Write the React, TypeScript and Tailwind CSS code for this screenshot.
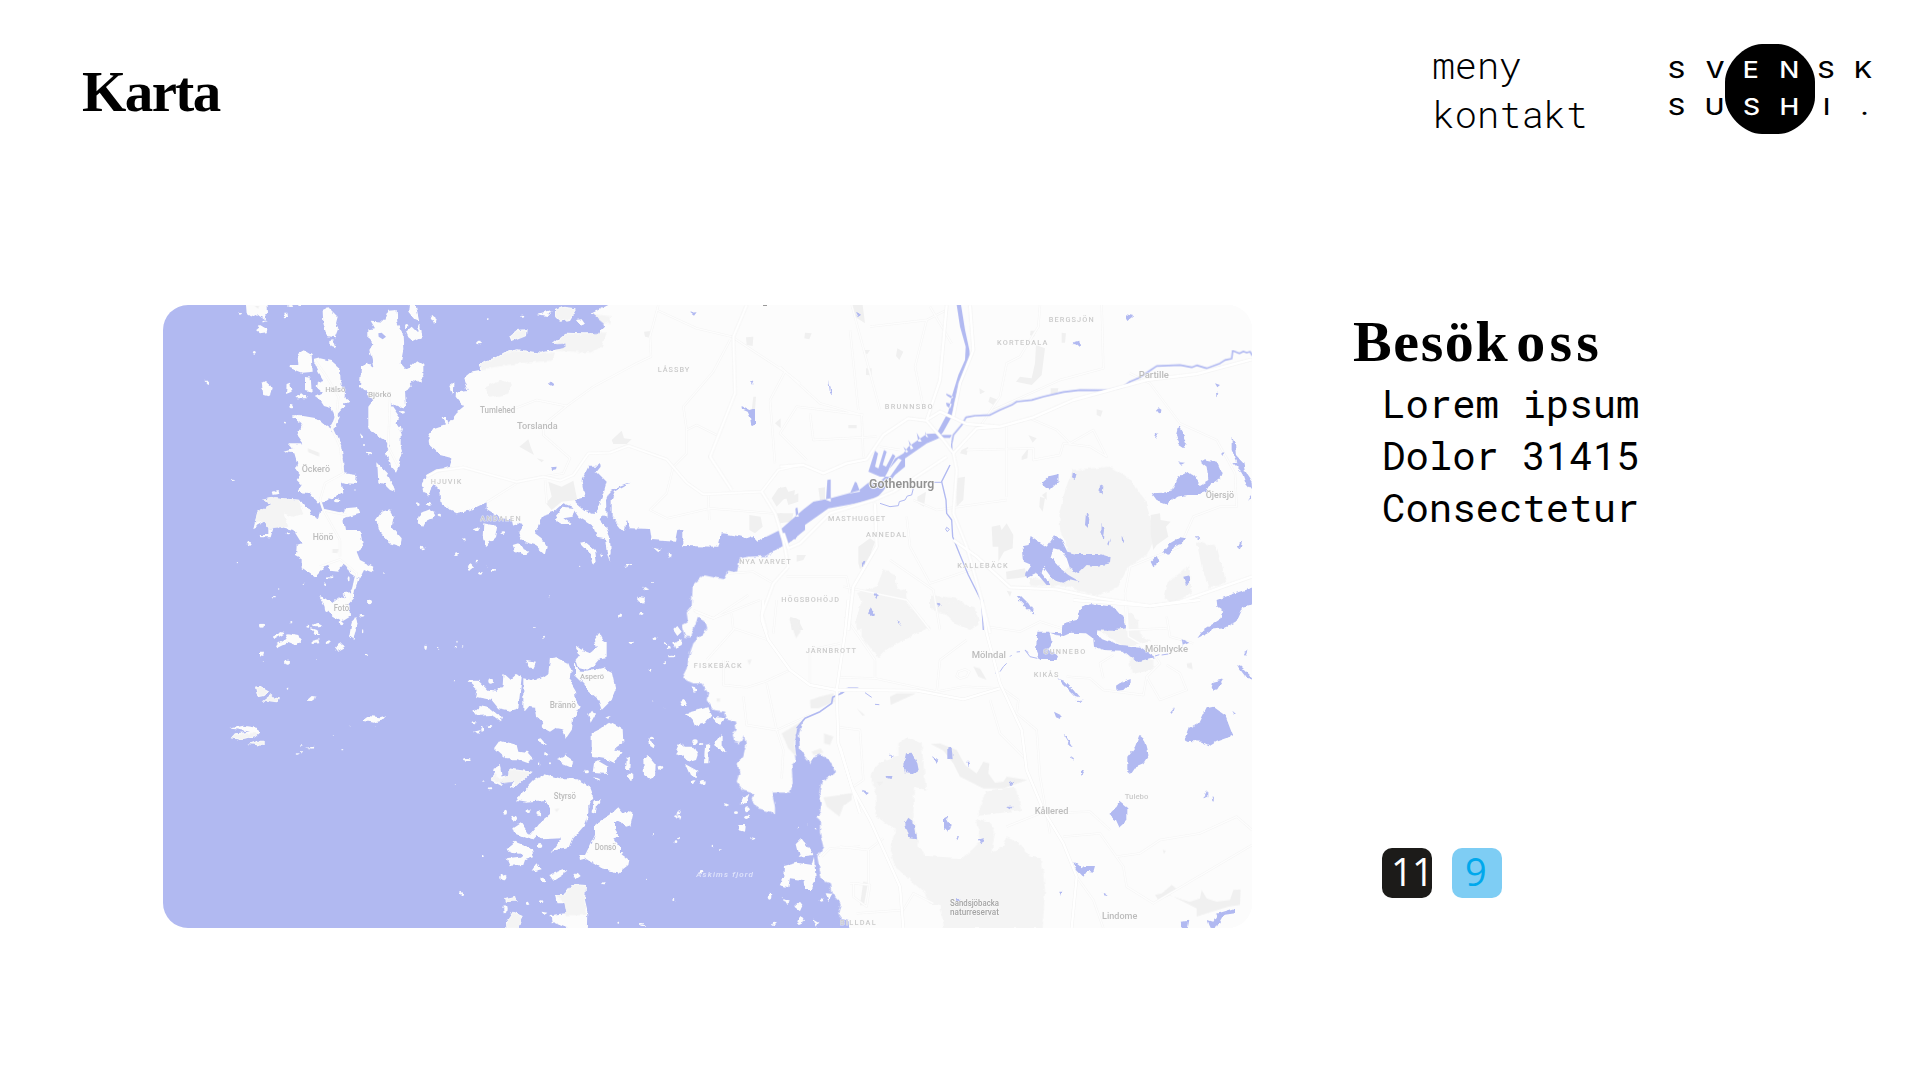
import React from 'react';

type Dot = [number, number, number, number];
type Label = [string, number, number, number, number, string?];

// Each map tile has its own origin; units are thirds of a pixel.
const NW = 'translate(160 300) scale(0.33333)';
const N = 'translate(420 300) scale(0.33333)';
const NE = 'translate(780 300) scale(0.33333)';
const SW = 'translate(160 600) scale(0.33333)';
const S = 'translate(460 600) scale(0.33333)';
const SE = 'translate(840 600) scale(0.33333)';

const landN = `M575 -30 565 15 515 40 530 50 553 55 555 80 540 95 540 110 525 100 490 100 440 98 420 115 398 132 437 130 437 145 400 150 360 158 290 148 250 160 230 172 205 178 175 195 183 212 150 218 130 235 143 270 108 275 107 290 132 322 110 340 85 372 78 348 65 352 78 372 40 385 25 410 28 435 60 465 97 475 90 500 50 512 20 528 5 555 20 588 35 570 40 550 60 570 65 610 90 630 110 640 145 632 200 607 200 630 240 655 275 658 280 680 300 668 310 680 295 700 310 725 345 735 375 762 380 740 365 715 345 700 368 645 400 635 430 610 455 620 475 650 520 680 530 710 555 715 560 755 568 785 572 755 570 710 555 675 538 662 545 645 560 650 558 600 570 575 600 560 640 545 640 535 625 537 637 545 610 562 585 575 575 600 575 650 610 693 615 690 620 660 630 685 690 687 695 720 765 725 772 690 790 687 790 738 895 740 905 700 940 705 980 715 1000 708 1015 725 1035 712 1075 705 1140 690 1140 720 2600 720 2600 -30z`;
const landS = `M1020 -200 985 -170 950 -155 920 -132 870 -130 840 -125 830 -80 805 -88 790 -62 730 -75 698 -45 695 20 680 38 684 65 665 75 675 110 690 112 715 50 735 60 742 85 700 130 688 165 680 205 665 235 700 250 725 250 745 280 740 300 760 330 795 335 800 355 825 365 830 390 818 400 822 425 840 430 852 405 858 435 850 470 833 490 838 520 830 545 850 572 880 580 875 600 895 625 930 635 945 645 945 620 935 578 990 578 998 550 995 495 1010 480 1003 430 1010 385 1035 355 1017 400 1020 450 1050 490 1060 470 1080 462 1115 490 1125 520 1085 545 1078 580 1085 610 1080 640 1068 650 1080 660 1080 700 1090 740 1072 770 1085 840 1110 850 1115 880 1142 910 1135 940 1160 984 1165 1020 2500 1020 2500 -200z`;
const islesNW = `M258 0 258 15 260 40 275 50 290 42 318 62 316 45 324 38 322 0z M285 88 300 75 322 88 320 97 300 100z M370 38 382 38 384 50 372 52z
M488 30 505 22 533 50 528 70 535 85 525 112 500 108 490 70z M508 120 520 118 530 145 508 138z M748 0 768 0 768 20 778 65 765 60 745 35z M818 45 826 50 825 75 812 55z M738 95 755 80 770 95 786 100 783 115 762 125 745 112z
M412 160 430 150 455 165 458 215 425 218 388 203 390 195 415 195z M460 180 480 175 515 183 540 205 542 255 555 270 552 320 530 345 540 350 520 388 510 380 525 355 515 325 492 318 480 300 468 290 490 280 470 262 475 245 490 240 475 215z
M435 228 452 230 455 275 435 270z M305 248 315 243 335 260 330 290 310 285z M380 252 390 248 395 275 378 282z M405 295 425 278 445 295z M133 242 148 242 142 253z
M685 32 710 30 712 70 728 100 730 150 722 190 740 210 770 183 790 195 790 225 780 240 765 245 752 242 755 260 735 272 738 318 712 322 690 310 718 350 710 370 722 400 722 440 728 460 715 500 708 515 690 495 678 460 690 435 658 410 625 385 625 320 640 300 600 260 603 200 622 188 640 200 635 175 628 150 640 130 625 115 625 88 645 85 632 62 672 65z
M400 350 430 348 470 355 500 380 530 400 545 440 550 490 552 520 590 525 588 552 560 550 545 545 550 580 520 590 500 605 475 610 450 580 412 575 425 555 410 540 420 525 405 505 412 490 403 460 370 455 400 447 385 430 430 430 412 405 425 370z
M305 600 345 592 420 600 455 645 475 655 480 630 550 640 555 625 590 622 598 642 550 655 555 690 600 690 610 740 590 755 600 780 640 800 635 820 612 810 598 838 570 820 555 790 535 815 510 812 500 795 465 832 425 805 425 775 408 765 410 735 425 730 400 690 360 680 325 685 315 665 280 685 292 635 335 612z M335 575 355 570 358 582 338 585z
M325 685 340 685 332 712 298 712 300 705 325 705z M590 835 596 838 582 880 572 880z M475 888 495 895 515 910 540 892 555 895 548 880 582 875 582 895 568 910 570 950 545 965 520 950 495 920z M585 950 592 970 580 1020 568 1010z
M652 490 680 520 700 555 705 575 690 570 675 555 655 550z M648 660 665 635 690 628 702 650 695 680 725 715 722 740 690 730 660 695z M775 650 790 635 825 635 820 655 800 660 790 680 773 670z M790 535 815 550 805 590 788 570z M600 400 610 410 605 420z M870 260 880 255 876 285z M620 455 638 458 626 466z`;
const islesN = `M405 30 430 20 470 25 450 60 420 65 405 50z M468 60 485 58 495 72 480 78z M352 42 395 30 380 48z M268 108 290 90 320 88 318 108 275 125z M88 258 100 250 98 285z M190 670 232 678 225 715 195 738 188 710z M278 735 295 730 305 745 328 755 315 765 285 752z M480 728 495 725 525 750 530 785 518 797 510 760z M405 650 430 620 465 625 458 650 430 655 455 672 420 672z M700 743 722 748 715 757z M742 758 752 760 750 775z M620 792 640 792 625 800z M652 890 675 895 670 908 652 900z M670 860 688 868 675 872z M140 798 152 790 162 800 150 810z M0 640 30 628 48 640 30 660 0 675z M35 45 47 55 42 75z`;
const islesSW = `M338 110 365 96 375 100 345 118z M348 135 375 118 385 100 415 105 423 125 405 138 380 128 352 142z M452 85 475 92 480 102 465 102z M455 122 475 118 478 130 455 132z M525 142 545 130 555 145 535 155z M575 65 588 52 592 72 580 118 568 110z M285 260 300 257 328 272 310 288 292 292z M305 305 335 282 335 292 360 295 350 310 322 305z M442 302 458 288 473 290 455 303z M605 362 625 348 660 352 680 346 665 362 640 368z M208 386 250 377 290 383 300 398 285 412 250 420 212 415 225 400 270 395 230 388z M265 432 290 422 314 422 314 438z M438 443 460 440 458 446z M300 155 312 155 310 168 300 166z M375 182 387 182 385 195 376 192z M793 137 804 138 802 146 793 146z M300 72 312 72 308 82z`;
const islesS = `M22 242 55 242 85 272 110 275 128 255 130 222 150 240 170 222 185 235 175 325 150 332 115 325 95 300 45 290 50 270z M190 235 215 240 250 230 265 220 270 175 290 172 325 190 335 215 330 250 345 275 348 300 362 320 340 355 335 390 318 415 305 385 290 382 270 395 250 385 245 365 228 350 225 320 205 318 190 335z
M195 182 228 188 220 205 205 202z M40 335 60 318 90 325 120 350 122 365 95 345 50 348z M42 395 62 390 55 405z M345 135 362 148 390 158 408 145 402 122 418 98 428 118 440 125 440 170 420 175 400 198 380 210 358 205 350 180 360 165z M345 180 358 215 380 215 430 203 455 215 467 270 455 300 425 330 415 300 385 275 370 250 345 225z
M385 345 395 330 405 345 392 368z M435 350 448 345 445 358z M395 400 425 385 450 365 488 385 490 430 465 448 485 455 465 490 440 478 395 470z M402 490 415 483 445 500 440 522 398 518z M395 528 415 532 422 543z M102 445 120 420 170 435 175 455 205 460 218 475 205 490 172 478 140 478z M235 418 245 415 258 430 245 435z M288 480 310 470 315 460 325 475 340 485 335 500 310 490z
M90 540 105 520 95 510 120 495 125 530 145 525 145 505 215 515 185 545 165 565 150 560 160 545 120 545 130 560z M222 540 255 523 300 535 350 535 385 555 400 595 385 615 385 640 370 680 340 715 330 740 305 745 275 755 305 715 245 718 230 705 215 720 165 700 160 685 185 668 210 705 240 670 270 645 270 625 255 600 200 605 172 600 180 585z
M400 605 412 600 408 640 398 635z M405 672 450 645 475 622 490 640 505 630 520 640 512 675 495 680 480 660 465 665 465 690 478 710 460 715 480 740 480 760 508 780 505 795 475 818 425 805 380 775 360 780 358 765 375 765 390 735 405 705z
M140 745 165 725 215 745 222 772 195 780 190 795 150 797 140 775 180 770 190 762 150 758z M215 815 232 790 245 808z M268 825 310 810 322 815 280 842z M340 825 350 815 362 828 348 838z M135 895 165 888 170 905 138 905z M138 965 158 935 188 948 175 984 175 1010 140 1010z M285 885 310 885 335 852 378 855 375 900 382 930 380 1010 320 1010 320 984 275 965 272 945 320 940 315 910 290 910z M245 935 262 938 250 948z
M562 415 582 432 578 445 568 438z M550 480 562 465 587 495 585 530 572 540 552 525z M500 475 510 470 508 510 498 510z M678 340 745 322 755 345 735 370 705 378 695 355z M758 350 795 355 780 375z M645 460 658 428 675 440 700 440 713 465 708 480 690 485 665 465z M675 492 712 512 710 535 690 525z M735 435 748 432 745 490 732 490z M762 435 785 402 785 432 800 460 775 445z M640 90 652 78 665 95 652 108z M640 130 668 118 665 135 645 145z M850 590 868 582 858 610 842 610z M835 672 858 672 855 695 836 690z M870 712 890 715 878 720z M787 610 808 612 795 618z M1010 730 1025 715 1062 765 1020 770z M972 798 1010 788 1055 795 1062 770 1067 835 1055 870 1035 870 1030 840 990 835 985 862 958 855 970 830z M965 895 990 905 978 915z M1003 920 1020 905 1030 918 1022 935z M1100 880 1118 882 1108 900z M1012 960 1022 948 1035 965 1018 975z M1060 955 1078 965 1070 980z M652 640 664 650 658 665z M565 212 578 208 574 220z M658 305 672 300 680 318 665 318z M692 258 705 262 710 275 698 278z`;
const dotsNW: Dot[] = [[240,40,5,4],[283,157,4,4],[313,65,6,3],[392,320,7,5],[374,371,4,3],[408,350,11,5],[220,538,8,2],[268,730,6,5],[233,788,3,2],[385,700,5,3],[508,832,12,3],[566,835,3,9],[530,602,8,5],[726,334,9,4],[775,612,4,6],[808,612,5,6],[838,645,5,4],[306,977,6,6],[630,908,7,5],[606,945,4,3],[470,975,14,4],[555,300,12,6],[550,318,6,4],[588,570,2,2],[675,818,2,2],[433,850,2,2],[356,867,2,2],[340,890,5,2],[785,742,5,5],[390,18,9,3],[420,16,6,2],[740,78,5,6],[778,80,4,7],[498,852,3,5],[720,385,5,8],[615,432,3,3]];
const dotsN: Dot[] = [[177,126,9,4],[205,57,4,3],[307,50,6,3],[0,98,5,14],[0,240,6,6],[25,612,8,4],[58,648,4,4],[170,688,7,6],[247,698,6,4],[133,718,4,3],[108,764,6,4],[181,820,6,4],[220,812,5,4],[171,786,4,4],[200,802,2,2],[387,890,2,2],[600,950,5,3],[665,943,5,4],[696,846,3,3],[620,800,3,3],[11,748,3,3],[545,765,4,4],[482,799,2,2],[344,983,2,1]];
const dotsSW: Dot[] = [[394,68,3,2],[445,80,6,3],[475,73,10,4],[503,126,6,5],[471,178,3,1],[619,166,5,3],[384,266,4,3],[547,449,3,2],[423,455,3,2],[413,462,3,2],[424,438,4,2],[648,380,3,2],[568,378,2,1],[520,406,2,1],[836,143,2,3],[888,125,2,3],[890,143,3,3],[907,142,2,1],[883,242,2,2],[608,95,2,7],[606,46,8,4],[310,184,2,1],[886,553,2,1],[905,881,4,4],[970,766,3,3],[990,565,7,3],[970,545,4,3],[630,5,9,6],[500,20,6,16],[545,70,5,6]];
const dotsS: Dot[] = [[513,128,5,4],[252,110,3,3],[225,82,3,1],[545,2,10,4],[480,50,6,3],[545,43,6,4],[585,116,4,4],[614,132,5,4],[626,140,6,6],[635,168,11,4],[614,190,4,3],[577,306,3,2],[615,322,2,2],[92,243,7,8],[42,368,7,5],[68,388,4,10],[90,378,7,3],[118,350,8,4],[22,478,10,4],[8,138,2,2],[200,455,6,3],[260,462,8,5],[238,492,3,7],[270,490,3,3],[380,515,7,5],[603,502,7,5],[512,530,8,12],[700,548,5,7],[728,548,9,8],[705,425,8,7],[722,432,5,3],[412,605,12,6],[400,632,5,8],[382,655,3,14],[135,635,6,6],[163,655,8,8],[235,640,6,8],[205,635,5,4],[240,738,7,6],[250,840,6,7],[130,832,9,9],[203,910,6,5],[245,905,5,4],[135,928,5,12],[430,850,5,3],[560,838,2,2],[640,900,3,3],[580,703,2,2],[654,714,6,4],[648,728,4,4],[658,636,4,5],[757,738,2,4],[782,750,3,2],[725,817,6,4],[545,970,8,4],[476,968,4,3],[930,890,7,9],[1083,903,7,5],[943,970,6,5],[1015,685,2,2],[1065,686,4,2],[1043,672,2,2],[862,628,7,6],[862,652,6,5],[828,638,6,4],[505,650,8,20],[482,760,5,4],[4,880,4,3],[70,766,4,3],[548,978,8,3],[770,318,6,5],[575,415,6,5],[650,650,4,4]];

const waterN = `M505 500 530 500 540 492 542 500 530 515 560 545 550 580 530 632 520 642 495 632 465 605 470 598 495 592 490 570 485 540z M387 252 395 246 405 254 392 260z M393 502 410 500 408 508 398 510z M810 38 830 37 822 47z M990 243 1000 246 996 255z M965 318 988 330 1005 325 1005 372 995 378 990 350 983 335 965 328z`;
const river = `M-45 765 25 730 75 690 75 675 145 625 240 608 285 600 310 572 345 525 375 500 375 475 440 430 475 415 490 395 515 350 525 300 570 175 568 150 555 90 543 15 543 -10 530 -10 530 15 540 80 557 140 555 180 535 225 515 290 505 335 470 400 440 402 385 440 370 460 345 475 315 530 300 545 265 548 235 572 150 595 100 605 70 628 0 690 -45 712z
M265 515 285 452 294 460 285 500 295 505 312 450 320 455 308 495 318 500 338 462 346 468 325 510 355 475 365 480 330 530 300 530z M138 600 142 540 152 538 152 605z M48 650 46 625 52 622 56 650z M210 580 225 545 230 548 240 575z M370 440 385 455 378 458z M385 420 400 445 392 448z M410 398 425 425 415 425z M435 395 445 412 438 410z M478 405 515 405 510 414 478 414z M498 280 520 290 515 296 500 286z M498 308 515 312 510 325 500 318z`;
const waterNE = `M145 240 158 282 150 280z M228 36 240 40 236 52z M1035 42 1060 48 1045 60z M878 128 898 122 900 136 885 138z M785 550 810 528 836 522 835 545 810 570 795 562z M878 518 890 520 885 540 876 535z M960 555 970 560 968 580 958 578z M918 638 928 655 925 685 915 675z M965 668 975 690 972 718 964 705z M990 712 985 738 982 728z M1025 708 1033 720 1026 730z M1195 378 1208 400 1218 430 1210 445 1195 435 1188 405z M1135 325 1145 332 1136 342 1128 332z M1128 398 1135 402 1125 418z M1305 250 1320 255 1312 262z M1308 278 1315 280 1310 292z M1198 487 1215 488 1202 495z M1323 462 1333 460 1330 468z
M1115 580 1150 578 1180 570 1195 530 1225 515 1245 530 1260 555 1285 540 1280 500 1262 485 1275 478 1310 485 1325 520 1318 538 1285 560 1280 575 1250 585 1220 585 1190 590 1175 600 1165 612 1130 600z M1355 410 1365 430 1368 465 1390 490 1395 515 1415 545 1416 570 1395 545 1385 515 1360 490 1372 488 1355 450z M1405 600 1416 585 1416 595z M1380 725 1387 722 1380 748 1374 740z M1150 755 1170 730 1200 712 1218 715 1205 732 1180 740 1165 765z M1245 712 1262 712 1258 718z M1112 785 1130 768 1138 785 1120 802z M1210 830 1230 826 1230 850 1218 858z
M728 742 745 738 752 708 800 740 825 706 845 720 862 755 890 762 960 762 992 772 990 790 950 798 920 795 895 820 870 805 860 775 840 750 820 745 812 770 835 800 865 825 900 845 870 838 850 848 820 840 790 800 785 820 812 855 800 855 770 820 738 835 735 825 755 795 732 785z
M708 885 720 885 745 910 766 942 745 930z M245 788 256 785 252 805z M282 878 296 885 292 898z M265 940 275 925 285 945 270 950z M352 962 362 968 358 972z M472 908 482 912 476 920z M1310 900 1370 878 1430 858 1430 910 1390 920 1370 965 1330 985 1280 990 1330 955 1335 935 1312 920z M845 990 850 970 890 960 900 925 930 910 960 915 1000 920 1030 955 1035 985 1000 992z`;
const waterSE = `M592 95 628 95 635 128 625 150 655 165 650 180 600 180 588 150z M630 98 665 100 668 75 710 65 720 25 755 10 800 20 850 50 855 80 770 88 775 110 840 135 900 140 945 172 890 185 850 152 790 150 762 140 760 118 735 100 690 98 668 108 650 106z M535 0 550 0 586 42 565 30z M85 40 92 22 104 48 90 48z M172 62 182 66 180 75z M290 10 300 10 296 20z
M652 235 672 242 700 270 718 292 705 288z M706 303 728 302 720 310z M642 335 662 345 660 357 648 352z M668 405 680 412 698 440 685 432z M692 468 702 475 698 482z M722 512 732 514 724 528z M828 260 850 245 872 237 872 248 850 270 830 272z M1115 262 1120 245 1150 238 1132 268 1120 272z M990 335 1002 322 995 342z M1036 410 1045 385 1080 365 1100 325 1120 320 1155 345 1178 405 1160 415 1130 425 1110 437 1085 425 1040 422z M1177 335 1188 345 1182 345z M1188 192 1205 200 1242 238 1215 228z M1210 155 1222 150 1216 168z M1025 118 1048 128 1028 137z M1130 0 1250 0 1250 10 1205 12 1180 50 1130 80 1100 100 1072 115 1090 90 1145 55 1150 30z
M862 515 862 470 885 440 898 405 915 420 926 465 910 490 885 500 870 522z M805 645 830 620 838 605 862 625 862 660 838 682 828 660z M190 495 198 460 215 458 232 490 236 510 215 522 195 520z M145 460 162 468 155 472z M140 528 158 528 155 540 142 538z M65 572 86 578 80 588z M276 468 295 482 288 492z M322 442 335 440 338 478 322 475z M382 485 390 485 388 500z M505 550 526 542 515 558z M195 670 205 653 220 665 228 715 208 712z M312 655 320 650 332 672 322 698 312 688z M350 712 360 712 355 724z M413 718 432 715 425 733z M500 620 518 620 512 628z M700 785 725 805 732 798 765 798 760 815 742 812 730 830 708 808z M655 872 664 872 660 892z M785 878 800 882 792 888z M1090 595 1102 570 1102 592z M1115 590 1124 602 1117 604z M1103 960 1120 965 1135 940 1185 925 1185 940 1150 945 1120 1000 1108 975z M1020 1000 1025 965 1045 962 1038 1000z M-20 945 0 955 25 962 30 1000 -20 1000z M348 895 358 895 356 905 348 905z`;

const parkNW = `M305 600 345 592 415 600 430 640 400 650 370 640 385 680 325 685 315 665 285 670 292 635 335 612z M978 262 1020 240 1052 252 1048 280 985 293z`;
const parkN = `M177 195 205 180 230 174 250 162 290 150 360 160 405 157 398 182 300 190 185 208z M405 152 437 142 437 130 405 132 440 100 490 102 560 97 545 140 515 158z M198 262 240 240 272 252 268 280 205 293z M407 30 430 22 468 26 448 58 420 63 407 50z M270 108 290 92 318 90 316 108 277 123z M520 42 572 48 572 72 553 70z`;
const parkNE = `M878 510 990 500 1050 535 1095 600 1110 650 1125 720 1100 765 1045 800 1015 860 950 890 870 860 750 855 745 835 800 840 870 800 860 740 840 690 838 640 855 570z M230 880 290 860 310 810 345 825 352 865 378 870 380 905 450 985 230 990 228 960 245 905z M450 885 530 895 590 935 600 960 575 985 520 955 450 925z M1160 850 1228 798 1235 880 1180 908 1150 895z M1250 725 1310 740 1340 850 1285 862 1265 800z M1035 920 1075 965 1075 990 1035 990z`;
const parkSE = `M65 0 190 0 262 85 145 145 115 175 65 110z M295 0 400 20 415 75 390 90 340 70z M770 88 860 80 890 65 905 110 930 125 850 140z M865 165 940 180 940 210 875 222z M92 515 130 480 175 470 175 430 205 412 245 430 258 570 222 560 220 650 235 735 258 768 370 775 420 725 410 655 445 665 465 700 455 755 490 740 500 712 540 730 570 770 605 775 615 870 608 984 312 984 300 915 265 910 255 880 165 800 150 750 165 690 110 650 105 570z M437 572 525 560 547 630 412 648z`;
const grayN = `M385 545 425 560 460 542 472 600 425 605 395 630 378 610 395 590z M298 440 325 418 332 440 342 465z M575 420 605 392 612 415 635 418 620 432 580 432z M672 95 693 93 690 113 675 110z M978 112 1000 110 998 138 980 135z M988 645 1022 650 1028 680 1005 700 988 690z M1070 640 1120 640 1115 665 1080 670z M1055 595 1075 565 1098 560 1112 590 1135 580 1135 605 1105 615 1098 590 1070 620z M1065 370 1082 355 1082 385z M1000 290 1008 290 1005 330 995 330z M1110 950 1140 960 1140 990 1120 985z M350 475 372 480 365 487z`;
const grayNE = `M215 15 248 15 255 70 225 50z M75 98 95 100 88 118 73 115z M250 150 270 150 262 162 250 160z M352 145 370 155 358 180 348 168z M258 205 275 205 275 226 258 225z M768 135 795 145 785 225 755 255 708 245 720 230 755 235 765 190z M598 265 615 275 600 283z M630 290 655 300 640 315 625 305z M812 265 835 265 832 282 812 282z M845 98 858 100 855 128 845 128z M752 92 770 92 762 110 750 105z M950 328 968 332 962 350 950 345z M745 405 770 415 758 428z M725 470 745 445 742 475 725 480z M635 680 660 675 665 690 680 670 700 705 698 745 672 755 655 785 655 740 638 740z M1112 645 1140 640 1142 660 1172 665 1158 680 1165 710 1130 735 1120 750 1112 700z M235 740 270 715 285 725 265 780 240 808 235 790z M0 560 20 575 25 595 0 600z M10 580 45 570 40 610z M115 565 135 562 135 600 120 600z M50 765 78 765 70 780 50 785z M0 640 40 645 20 665 0 668z M528 535 555 530 550 600 530 620z M412 590 438 575 432 620 412 608z M780 590 795 595 788 635 778 620z M678 815 735 805 740 830 710 835 680 838z M680 872 695 875 690 890z M30 955 60 970 70 990 35 990z M205 375 230 375 230 385 205 385z M800 575 800 600 786 585z M545 450 565 440 560 465 540 460z`;
const grayS = `M988 55 1010 55 1022 95 1008 115z M1050 300 1080 290 1120 280 1125 305 1075 325 1052 325z M965 400 1035 358 1010 385 1003 430 1008 470 985 445z M1092 400 1120 410 1110 435 1092 430z M1055 455 1082 445 1090 458 1060 465z M1090 592 1180 580 1155 605 1138 650 1100 620z M862 180 875 178 868 195z M770 295 780 295 780 305 770 305z M284 628 298 625 290 636z`;
const parkS = `M137 896 164 890 168 903 140 903z M140 965 158 938 186 949 174 984 142 984z M287 887 312 887 336 854 376 857 373 900 378 945 320 945 313 908z M93 538 107 522 120 540 147 523 147 508 211 516 165 561 158 545 130 550z`;
const graySE = `M150 290 170 280 228 280 152 315z M272 432 300 430 350 450 375 495 410 520 430 485 448 490 445 520 465 548 490 545 500 530 562 540 490 565 430 565 360 530 340 490 310 452z M0 585 35 580 35 600 15 615 0 612z M945 885 965 880 995 855 1012 868 985 885 1030 900 1050 905 1080 895 1085 870 1100 895 1130 905 1170 900 1180 870 1202 868 1200 915 1165 920 1100 940 1070 950 1070 925 1030 905 990 885 955 900z M70 845 84 848 72 915 60 915z M50 325 75 345 68 347z M400 200 420 205 440 240 415 230z M1040 190 1055 188 1058 208 1042 202z M110 545 130 545 118 558z M968 750 978 752 972 762z`;

const mainRoads: [string, string][] = [
  [N, 'M20 530 50 513 130 502 290 546 370 530 420 542 460 525 505 460 570 458 625 437 740 478 800 548 850 583 1025 575 1075 510 1140 495'],
  [N, 'M980 15 940 110 945 280 870 470 935 570 M1025 575 1065 640 1090 720 1105 800 1060 850 1025 945 1040 1000'],
  [NE, 'M0 500 70 495 130 520 200 490 260 478 310 405 385 355 440 362 490 420 520 460 530 510 520 640 560 740 605 900 630 1000'],
  [NE, 'M440 360 480 335 560 372 660 380 760 352 880 300 1100 240 1250 222 1416 178 M660 380 590 385 520 460'],
  [NE, 'M10 700 25 745 60 730 150 640 280 600 340 575 500 470 M500 15 480 240 440 360 M570 15 580 150 540 250 520 350'],
  [NE, 'M520 720 590 770 690 862 830 868 960 895 1110 918 1200 905 1416 830 M285 610 290 740 220 860 205 990'],
  [S, 'M910 0 905 60 925 120 990 210 1050 255 1130 270 1200 270 M1165 0 1155 100 1130 270 1135 430 1200 640'],
  [SE, 'M425 0 440 100 480 250 545 390 560 510 610 630 670 730 710 830 695 984 M0 270 230 272 370 298 480 265'],
  [SE, 'M0 440 35 560 90 660 180 860 190 984 M700 0 930 18 1080 0'],
];
const minorRoads: [string, string][] = [
  [NW, 'M465 180 500 230 535 290 530 345 515 385 540 440 550 520 495 550 480 600 490 630 540 720 540 770 M690 290 685 440 715 500 M480 800 540 778 590 820 572 900 M490 630 560 645'],
  [N, 'M285 325 350 300 440 318 520 260 650 190 693 170 690 110 715 15 M440 318 370 375 370 405 450 475 430 520 370 530 M710 30 830 85 935 110 1095 215 1140 250 M930 120 880 215 790 320 800 390 800 460 760 500 M800 390 830 375 890 405 M760 500 740 580 690 630 740 655 870 625 1060 640 M865 585 868 660 M1095 215 1050 300 1065 490 M200 607 290 550 M925 820 1000 815 1060 850 M825 935 880 955 985 885 M375 540 380 610'],
  [NE, 'M0 200 120 310 245 345 250 470 M215 15 300 330 M210 90 235 330 M270 80 440 60 500 30 M440 60 405 200 430 320 M450 20 515 130 M780 15 775 80 720 170 680 190 660 290 600 380 M965 15 970 205 840 240 640 330 M1050 220 1110 250 1200 370 1310 420 1365 520 1370 620 1320 620 1240 650 1200 740 1050 800 1035 880 M750 355 830 390 870 430 940 390 980 470 930 440 850 430 840 465 760 480 760 445 560 450 M680 380 680 590 M250 345 50 320 0 400 80 480 M90 340 100 420 290 410 M300 440 360 450 M400 600 470 630 680 600 M330 780 460 870 480 990 M380 650 390 740 450 850 600 800 M20 830 200 830 210 880 M1035 880 1040 990 1160 985 M190 860 380 900 450 990'],
  [S, 'M700 30 760 55 900 0 M815 40 820 90 740 180 M820 85 925 120 M850 290 860 375 950 390 1050 345 M860 262 915 245 990 210 M790 180 790 255 860 262 M920 250 950 390 970 450 965 535 M950 0 940 100 M1200 740 1110 745 1085 770 M1050 255 1050 150 1140 130 M1170 850 1200 850'],
  [SE, 'M15 50 105 180 105 235 0 232 M0 382 60 390 70 540 40 560 M105 235 290 275 370 260 480 265 M290 275 300 180 380 120 M440 80 540 95 600 65 680 90 M480 260 535 300 530 340 590 390 600 530 630 700 M450 300 480 400 560 480 M500 680 600 640 750 635 810 690 M670 710 780 700 850 800 860 860 940 910 1236 735 M830 770 900 760 960 720 1080 700 1190 650 1236 690 M710 830 760 900 790 984 M680 230 750 235 790 270 910 285 920 230 960 190 940 160 M790 235 780 190 820 165 M920 230 960 300 1040 270 1020 220 980 195 M860 0 865 110 900 130 M980 50 990 110 1060 130 M40 850 90 855 80 920 40 890z M50 940 190 930 220 880 280 910 M85 750 85 850 M0 740 85 750 130 715 M350 228 355 215 375 208 388 215 380 230 360 236z'],
];

const riverLines: [string, string, number][] = [
  [NE, 'M515 430 520 405 545 375 558 352 585 347 630 345 660 330 695 315 710 305 755 300 790 290 850 276 900 270 985 271 1030 260 1050 245 1080 232 1105 215 1130 198 1200 195 1235 202 1250 196 1280 205 1320 190 1335 180 1355 176 1358 152 1378 160 1390 154 1400 158 1410 155 1418 168', 5],
  [NE, 'M515 430 516 460 M510 495 485 545 498 600 500 640 515 660 518 710 540 765 565 825 605 905 610 990', 4],
  [NE, 'M300 610 330 620 355 617 358 605 375 600 382 588 395 585 400 565 M430 547 485 547 M500 682 508 688 502 695 497 688z', 3],
  [S, 'M1010 385 1035 355 1080 335 1115 310 1118 292 1145 280 1165 265 1195 265', 5],
  [SE, 'M428 0 432 70', 5],
  [SE, 'M432 70 450 135 458 170 M468 222 470 205 M480 215 490 200 500 190 M510 170 515 165 M530 156 540 155 M555 150 570 170 592 175 M555 150 565 158 M945 168 958 164 M965 165 985 162 M0 280 20 265 50 265 M75 278 95 292 M105 313 118 314', 3],
];

const labels: [string, Label[]][] = [
  [NW, [['Hälsö', 496, 275, 60, 24], ['Björkö', 624, 290, 70, 24], ['Öckerö', 425, 515, 85, 26], ['Hönö', 458, 719, 62, 26], ['Fotö', 521, 932, 46, 25], ['HJUVIK', 812, 551, 92, 22], ['Tumlehed', 960, 340, 106, 25], ['ANDALEN', 961, 663, 121, 22]]],
  [N, [['Torslanda', 291, 386, 122, 27], ['LÅSSBY', 713, 216, 95, 22], ['NYA VARVET', 958, 791, 154, 22]]],
  [NE, [['BERGSJÖN', 806, 65, 135, 22], ['KORTEDALA', 651, 134, 151, 22], ['BRUNNSBO', 314, 328, 144, 22], ['Partille', 1076, 234, 91, 27], ['Öjersjö', 1277, 594, 85, 26], ['MASTHUGGET', 144, 662, 172, 22], ['ANNEDAL', 258, 710, 121, 22], ['KALLEBÄCK', 532, 805, 151, 22], ['HÖGSBOHÖJD', 4, 905, 173, 22]]],
  [S, [['JÄRNBROTT', 1037, 159, 151, 22], ['FISKEBÄCK', 701, 203, 144, 22], ['Asperö', 360, 237, 72, 24], ['Brännö', 269, 323, 79, 25], ['Styrsö', 281, 598, 67, 25], ['Donsö', 404, 750, 65, 25]]],
  [SE, [['Mölndal', 395, 174, 103, 28], ['GUNNEBO', 610, 163, 126, 22], ['KIKÅS', 581, 230, 74, 22], ['Mölnlycke', 915, 156, 129, 28], ['Kållered', 584, 641, 101, 27], ['Tulebo', 854, 597, 71, 23, '#cbcbcb'], ['Lindome', 786, 957, 106, 27], ['BILLDAL', 0, 976, 107, 22], ['Sandsjöbacka', 330, 917, 147, 25, '#a4a4a4'], ['naturreservat', 330, 946, 147, 25, '#a4a4a4']]],
];

function Dots({ items }: { items: Dot[] }) {
  return <>{items.map(([x, y, rx, ry]) => <ellipse key={`${x}-${y}`} cx={x} cy={y} rx={rx} ry={ry} />)}</>;
}

function CityMap() {
  return (
    <svg viewBox="163 305 1089 623" className="block h-[623px] w-[1089px] rounded-[25px] bg-[#fcfcfc]" aria-label="Karta över Göteborg">
      <defs>
        <filter id="coast" x="0" y="0" width="1920" height="1080" filterUnits="userSpaceOnUse">
          <feTurbulence type="fractalNoise" baseFrequency="0.16" numOctaves="2" seed="7" />
          <feDisplacementMap in="SourceGraphic" scale="4.5" xChannelSelector="R" yChannelSelector="G" />
        </filter>
      </defs>
      <path d="M163 305 H1100 V928 H163z" fill="#b1b9f1" />
      <path d="M1000 305 H1252 V928 H1000z" fill="#fcfcfc" />
      <g filter="url(#coast)" fill="#fcfcfc">
        <path transform={N} d={landN} />
        <path transform={S} d={landS} />
        <g transform={NW}><path d={islesNW} /><Dots items={dotsNW} /></g>
        <g transform={N}><path d={islesN} /><Dots items={dotsN} /></g>
        <g transform={SW}><path d={islesSW} /><Dots items={dotsSW} /></g>
        <g transform={S}><path d={islesS} /><Dots items={dotsS} /></g>
      </g>
      <g filter="url(#coast)" fill="#f4f4f4">
        <path transform={NW} d={parkNW} />
        <path transform={N} d={parkN} />
        <path transform={NE} d={parkNE} />
        <path transform={S} d={parkS} />
        <path transform={SE} d={parkSE} />
        <path transform={SW} d="M287 262 300 259 325 272 310 286 294 290z M307 304 335 285 335 293 357 296 348 308z M214 414 225 402 270 399 297 399 283 410 250 418z M268 431 290 424 312 424 312 436z" />
      </g>
      <g fill="#f0f0f0">
        <path transform={NW} d="M443 445 478 458 478 470 445 457z M517 747 537 747 532 760 517 758z M284 18 298 18 294 26z" />
        <path transform={N} d={grayN} />
        <path transform={NE} d={grayNE} />
        <path transform={S} d={grayS} />
        <path transform={SE} d={graySE} />
      </g>
      <path transform={NW} d="M655 100 665 98 678 110 668 118 656 110z" fill="#b1b9f1" />
      <g fill="none" strokeLinejoin="round">
        {minorRoads.map(([t, d]) => <path key={d} transform={t} d={d} stroke="#f4f4f4" strokeWidth="7" />)}
        {minorRoads.map(([t, d]) => <path key={d} transform={t} d={d} stroke="#fdfdfd" strokeWidth="4" />)}
      </g>
      <g filter="url(#coast)" fill="#b1b9f1">
        <path transform={N} d={waterN} />
        <path transform={NE} d={waterNE} />
        <path transform={SE} d={waterSE} />
      </g>
      <path transform={NE} d={river} fill="#b1b9f1" />
      <g fill="none" stroke="#b1b9f1" strokeLinejoin="round">
        {riverLines.map(([t, d, w]) => <path key={d} transform={t} d={d} strokeWidth={w} />)}
      </g>
      <g fill="none" strokeLinejoin="round">
        {mainRoads.map(([t, d]) => <path key={d} transform={t} d={d} stroke="#f2f2f2" strokeWidth="10" />)}
        {mainRoads.map(([t, d]) => <path key={d} transform={t} d={d} stroke="#ffffff" strokeWidth="7" />)}
      </g>
      <g fontFamily="Roboto, sans-serif" strokeLinejoin="round">
        {labels.map(([t, items]) => (
          <g key={t} transform={t}>
            {items.map(([text, x, y, w, size, fill]) => (
              <text key={text} x={x} y={y} textLength={w} lengthAdjust={size === 22 ? 'spacing' : 'spacingAndGlyphs'} fontSize={size} fontWeight="500" fill={fill ?? (size === 22 ? '#cbcbcb' : '#bcbcbc')} stroke="#fcfcfc" strokeOpacity="0.6" strokeWidth="3" paintOrder="stroke">{text}</text>
            ))}
          </g>
        ))}
        <text transform={NE} x="267" y="564" textLength="196" fontSize="37" fontWeight="600" fill="#929292" stroke="#fcfcfc" strokeWidth="5" paintOrder="stroke">Gothenburg</text>
        <text transform={S} x="709" y="830" textLength="170" fontSize="24" fontStyle="italic" fontWeight="500" fill="#e0e4fb">Askims fjord</text>
      </g>
      <path d="M763 305 h4 v1 h-4z" fill="#999" />
    </svg>
  );
}

function Logo() {
  return (
    <svg viewBox="0 0 208 92" className="block h-[92px] w-[208px]" aria-label="Svensk Sushi">
      <path d="M94 1 H110 C128 1 147 21 147 39 V54 C147 72 128 91 110 91 H94 C76 91 57 72 57 54 V39 C57 21 76 1 94 1z" />
      <circle cx="102" cy="46" r="44.5" />
      <g fontFamily="Inter, sans-serif" fontSize="23" fontWeight="500" transform="scale(1.15 1)">
        <text x="0 32.8 65 96.8 130 161.7" y="35">SV<tspan fill="#fff">EN</tspan>SK</text>
        <text x="0 32 65.2 97 134.7 167.4" y="72">SU<tspan fill="#fff">SH</tspan>I.</text>
      </g>
    </svg>
  );
}

export default function App() {
  return (
    <div className="h-[1080px] w-[1920px] overflow-hidden bg-white text-black">
      <header className="flex h-[305px] items-start justify-between pl-[82px] pr-[44px]">
        <h1 className="mt-[60px] font-['Liberation_Serif'] text-[57px] leading-[64px] font-bold tracking-[-1.6px]">Karta</h1>
        <div className="flex items-start">
          <nav className="mt-[40px] mr-[80px] flex flex-col font-['Roboto_Mono','DejaVu_Sans_Mono',monospace] text-[37px] leading-[49px] font-light">
            <a>meny</a>
            <a>kontakt</a>
          </nav>
          <div className="mt-[43px]"><Logo /></div>
        </div>
      </header>
      <main className="flex pl-[163px]">
        <CityMap />
        <section className="flex h-[623px] flex-col pl-[101px]">
          <h2 className="mt-[5px] font-['Liberation_Serif'] text-[58px] leading-[64px] font-bold tracking-[1.6px] [word-spacing:-9px]">
            Besök <span className="tracking-[4.2px]">oss</span>
          </h2>
          <address className="ml-[29px] mt-[3px] flex flex-col font-['Roboto_Mono','DejaVu_Sans_Mono',monospace] text-[39px] leading-[52px] not-italic">
            <span>Lorem ipsum</span>
            <span>Dolor 31415</span>
            <span>Consectetur</span>
          </address>
          <div className="mt-auto mb-[30px] ml-[29px] flex gap-5 font-['Open_Sans'] text-[38px] leading-[47px]">
            <span className="h-[50px] w-[50px] rounded-[10px] bg-[#1c1b19] pl-[9px] tracking-[-0.8px] text-white">11</span>
            <span className="h-[50px] w-[50px] rounded-[10px] bg-[#7ecdf4] pl-[13px] text-[#00a8ec]">9</span>
          </div>
        </section>
      </main>
    </div>
  );
}
